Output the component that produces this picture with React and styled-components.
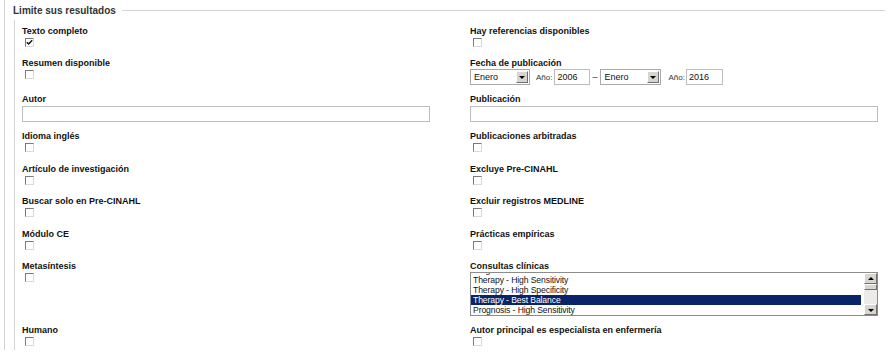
import React from "react";
import styled, { createGlobalStyle } from "styled-components";

const GlobalStyle = createGlobalStyle`
  html, body {
    margin: 0;
    padding: 0;
    background: #fff;
  }
  body {
    font-family: "Liberation Sans", Arial, sans-serif;
    color: #111;
  }
`;

const Frame = styled.div`
  margin-left: 4px;
  border-left: 1px solid #d4d4d4;
  height: 350px;
  box-sizing: border-box;
`;

const LegendRow = styled.div`
  display: flex;
  align-items: center;
  height: 20px;
  padding-left: 8px;
`;

const LegendText = styled.span`
  font-size: 10px;
  line-height: 12px;
  font-weight: bold;
  color: #333;
  padding-top: 1px;
`;

const LegendLine = styled.div`
  flex: 1;
  border-top: 1px solid #d4d4d4;
  margin: 0 8px 0 6px;
`;

const Body = styled.div`
  margin-left: 9px;
  border-left: 1px solid #d4d4d4;
  padding: 5.5px 0 0 7px;
  height: 330px;
  box-sizing: border-box;
  display: grid;
  grid-template-columns: 448px 408px;
  row-gap: 9px;
  align-items: start;
  align-content: start;
`;

const Field = styled.div`
  display: flex;
  flex-direction: column;
  align-items: flex-start;
`;

const Label = styled.div`
  font-size: 9px;
  line-height: 11px;
  height: 11px;
  font-weight: bold;
  color: #111;
  white-space: nowrap;
`;

const Box = styled.span`
  display: flex;
  align-items: center;
  justify-content: center;
  width: 9px;
  height: 9px;
  box-sizing: border-box;
  margin: 1px 0 2.5px 3px;
  background: #fff;
  border-top: 1px solid #7b7b7b;
  border-left: 1px solid #7b7b7b;
  border-right: 1px solid #dadada;
  border-bottom: 1px solid #dadada;
`;

const Checkbox = ({ checked }) => (
  <Box>
    {checked && (
      <svg width="7" height="7" viewBox="0 0 7 7">
        <path d="M0.8 3.2 L2.6 5 L6.2 1.2" stroke="#111" strokeWidth="1.4" fill="none" />
      </svg>
    )}
  </Box>
);

const TextInput = styled.div`
  width: 408px;
  height: 16px;
  box-sizing: border-box;
  margin-top: 1px;
  border: 1px solid #bdbdbd;
  background: #fff;
`;

const DateRow = styled.div`
  display: flex;
  align-items: center;
  height: 16px;
`;

const SelectBox = styled.div`
  display: flex;
  align-items: center;
  justify-content: space-between;
  width: ${(p) => p.w}px;
  height: 16px;
  box-sizing: border-box;
  border: 1px solid #a9a9a9;
  background: #fff;
  padding-left: 3px;
  font-size: 9px;
  color: #111;
`;

const ArrowButton = styled.span`
  position: relative;
  display: block;
  width: ${(p) => p.w || 12}px;
  height: ${(p) => p.h || 12}px;
  box-sizing: border-box;
  margin-right: ${(p) => p.mr ?? 1}px;
  background: #d8d5ce;
  border-top: 1px solid #fff;
  border-left: 1px solid #fff;
  border-right: 1px solid #6f6f6f;
  border-bottom: 1px solid #6f6f6f;
  &::after {
    content: "";
    position: absolute;
    left: 50%;
    top: 50%;
    margin-left: -3px;
    margin-top: ${(p) => (p.up ? -2 : -1)}px;
    border-left: 3px solid transparent;
    border-right: 3px solid transparent;
    ${(p) => (p.up ? "border-bottom: 3px solid #000;" : "border-top: 3px solid #000;")}
  }
`;

const YearLabel = styled.span`
  font-size: 8px;
  color: #333;
  margin-left: ${(p) => p.ml}px;
`;

const YearInput = styled.div`
  display: flex;
  align-items: center;
  width: ${(p) => p.w}px;
  height: 16px;
  box-sizing: border-box;
  margin-left: ${(p) => p.ml || 1}px;
  padding-left: 2px;
  border: 1px solid #bdbdbd;
  font-size: 9px;
  color: #111;
`;

const Dash = styled.span`
  font-size: 9px;
  color: #333;
  margin: 0 3px 0 2px;
`;

const ListBox = styled.div`
  display: flex;
  width: 408px;
  height: 44px;
  box-sizing: border-box;
  border: 1px solid #8c8c8c;
  background: #fff;
`;

const OptionsPane = styled.div`
  flex: 1;
  overflow: hidden;
`;

const OptionList = styled.div`
  margin-top: -8px;
`;

const Option = styled.div`
  height: 10px;
  line-height: 10px;
  font-size: 8.6px;
  letter-spacing: -0.1px;
  padding-left: 2px;
  white-space: nowrap;
  color: ${(p) => (p.selected ? "#fff" : "#111")};
  background: ${(p) => (p.selected ? "#0a246a" : "transparent")};
`;

const Scrollbar = styled.div`
  display: flex;
  flex-direction: column;
  width: 13px;
  margin-left: 3px;
  background: #ecebe8;
`;

const Thumb = styled.span`
  display: block;
  height: 6px;
  box-sizing: border-box;
  background: #d8d5ce;
  border-top: 1px solid #fff;
  border-left: 1px solid #fff;
  border-right: 1px solid #6f6f6f;
  border-bottom: 1px solid #6f6f6f;
`;

const Track = styled.div`
  flex: 1;
`;

const CheckField = ({ label, checked }) => (
  <Field>
    <Label>{label}</Label>
    <Checkbox checked={checked} />
  </Field>
);

const options = [
  "Ninguno",
  "Therapy - High Sensitivity",
  "Therapy - High Specificity",
  "Therapy - Best Balance",
  "Prognosis - High Sensitivity",
];

export default function App() {
  return (
    <>
      <GlobalStyle />
      <Frame>
        <LegendRow>
          <LegendText>Limite sus resultados</LegendText>
          <LegendLine />
        </LegendRow>
        <Body>
          <CheckField label="Texto completo" checked />
          <CheckField label="Hay referencias disponibles" />

          <CheckField label="Resumen disponible" />
          <Field>
            <Label>Fecha de publicación</Label>
            <DateRow>
              <SelectBox w={60}>
                Enero
                <ArrowButton />
              </SelectBox>
              <YearLabel ml={6}>Año:</YearLabel>
              <YearInput w={36} ml={2}>2006</YearInput>
              <Dash>–</Dash>
              <SelectBox w={61}>
                Enero
                <ArrowButton />
              </SelectBox>
              <YearLabel ml={7}>Año:</YearLabel>
              <YearInput w={37}>2016</YearInput>
            </DateRow>
          </Field>

          <Field>
            <Label>Autor</Label>
            <TextInput />
          </Field>
          <Field>
            <Label>Publicación</Label>
            <TextInput />
          </Field>

          <CheckField label="Idioma inglés" />
          <CheckField label="Publicaciones arbitradas" />

          <CheckField label="Artículo de investigación" />
          <CheckField label="Excluye Pre-CINAHL" />

          <CheckField label="Buscar solo en Pre-CINAHL" />
          <CheckField label="Excluir registros MEDLINE" />

          <CheckField label="Módulo CE" />
          <CheckField label="Prácticas empíricas" />

          <CheckField label="Metasíntesis" />
          <Field>
            <Label>Consultas clínicas</Label>
            <ListBox>
              <OptionsPane>
                <OptionList>
                  {options.map((o, i) => (
                    <Option key={o} selected={i === 3}>
                      {o}
                    </Option>
                  ))}
                </OptionList>
              </OptionsPane>
              <Scrollbar>
                <ArrowButton up w={13} h={11} mr={0} />
                <Thumb />
                <Track />
                <ArrowButton w={13} h={11} mr={0} />
              </Scrollbar>
            </ListBox>
          </Field>

          <CheckField label="Humano" />
          <CheckField label="Autor principal es especialista en enfermería" />
        </Body>
      </Frame>
    </>
  );
}
